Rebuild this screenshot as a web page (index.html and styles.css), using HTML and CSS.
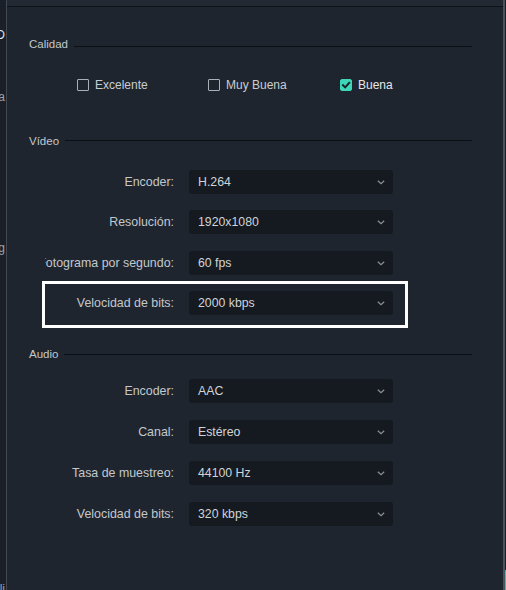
FILE: index.html
```html
<!DOCTYPE html>
<html lang="es">
<head>
<meta charset="utf-8">
<title>Ajustes de exportación</title>
<link rel="stylesheet" href="styles.css">
</head>
<body>
<div class="window">
  <div class="side">
    <div class="frag frag-1"><span>HD</span></div>
    <div class="frag frag-2"><span>Formata</span></div>
    <div class="frag frag-3"><span>Config</span></div>
    <div class="frag frag-4"><span>Compatibili</span></div>
  </div>
  <div class="main">
    <div class="topband"></div>
    <div class="content">
      <section class="sec sec-quality">
        <div class="sec-head"><span>Calidad</span><i class="rule"></i></div>
        <div class="checks">
          <label class="check"><span class="box"></span>Excelente</label>
          <label class="check"><span class="box"></span>Muy Buena</label>
          <label class="check checked"><span class="box"><svg viewBox="0 0 12 12" width="12" height="12"><path d="M3 6.2 L5.2 8.4 L9.2 3.8" fill="none" stroke="#1b2129" stroke-width="2" stroke-linecap="square"/></svg></span>Buena</label>
        </div>
      </section>

      <section class="sec sec-video">
        <div class="sec-head"><span>Vídeo</span><i class="rule"></i></div>
        <div class="rows rows-video">
          <div class="row"><span class="lbl"><span>Encoder:</span></span><div class="select"><span>H.264</span><svg class="chev" viewBox="0 0 8 5" width="8" height="5"><path d="M0.8 0.8 L4 3.8 L7.2 0.8" fill="none" stroke="#8a9098" stroke-width="1.2"/></svg></div></div>
          <div class="row"><span class="lbl"><span>Resolución:</span></span><div class="select"><span>1920x1080</span><svg class="chev" viewBox="0 0 8 5" width="8" height="5"><path d="M0.8 0.8 L4 3.8 L7.2 0.8" fill="none" stroke="#8a9098" stroke-width="1.2"/></svg></div></div>
          <div class="row"><span class="lbl"><span>Fotograma por segundo:</span></span><div class="select"><span>60 fps</span><svg class="chev" viewBox="0 0 8 5" width="8" height="5"><path d="M0.8 0.8 L4 3.8 L7.2 0.8" fill="none" stroke="#8a9098" stroke-width="1.2"/></svg></div></div>
          <div class="row highlighted"><span class="lbl"><span>Velocidad de bits:</span></span><div class="select"><span>2000 kbps</span><svg class="chev" viewBox="0 0 8 5" width="8" height="5"><path d="M0.8 0.8 L4 3.8 L7.2 0.8" fill="none" stroke="#8a9098" stroke-width="1.2"/></svg></div></div>
        </div>
      </section>

      <section class="sec sec-audio">
        <div class="sec-head"><span>Audio</span><i class="rule"></i></div>
        <div class="rows rows-audio">
          <div class="row"><span class="lbl"><span>Encoder:</span></span><div class="select"><span>AAC</span><svg class="chev" viewBox="0 0 8 5" width="8" height="5"><path d="M0.8 0.8 L4 3.8 L7.2 0.8" fill="none" stroke="#8a9098" stroke-width="1.2"/></svg></div></div>
          <div class="row"><span class="lbl"><span>Canal:</span></span><div class="select"><span>Estéreo</span><svg class="chev" viewBox="0 0 8 5" width="8" height="5"><path d="M0.8 0.8 L4 3.8 L7.2 0.8" fill="none" stroke="#8a9098" stroke-width="1.2"/></svg></div></div>
          <div class="row"><span class="lbl"><span>Tasa de muestreo:</span></span><div class="select"><span>44100 Hz</span><svg class="chev" viewBox="0 0 8 5" width="8" height="5"><path d="M0.8 0.8 L4 3.8 L7.2 0.8" fill="none" stroke="#8a9098" stroke-width="1.2"/></svg></div></div>
          <div class="row"><span class="lbl"><span>Velocidad de bits:</span></span><div class="select"><span>320 kbps</span><svg class="chev" viewBox="0 0 8 5" width="8" height="5"><path d="M0.8 0.8 L4 3.8 L7.2 0.8" fill="none" stroke="#8a9098" stroke-width="1.2"/></svg></div></div>
        </div>
      </section>
    </div>
  </div>
  <div class="rside"><div class="rside-line"></div><div class="rside-edge"><div class="teal"></div></div></div>
</div>
</body>
</html>
```

FILE: styles.css
```css
*, *::before, *::after { box-sizing: border-box; }
html, body { margin: 0; padding: 0; }
body {
  background: #1b2028;
  font-family: "Liberation Sans", Arial, sans-serif;
  font-size: 12px;
  color: #c8cdd2;
}
.window {
  display: flex;
  width: 506px;
  height: 590px;
  overflow: hidden;
}

/* left partial panel */
.side {
  width: 7px;
  flex: none;
  background: #1b2028;
  border-right: 1px solid #434a53;
  overflow: hidden;
  display: flex;
  flex-direction: column;
}
.frag {
  display: flex;
  justify-content: flex-end;
  white-space: nowrap;
  line-height: 14px;
  height: 14px;
  color: #9aa1a8;
  font-size: 12px;
  margin-right: 1px;
}
.frag-1 { margin-top: 28px; color: #dfe8f0; }
.frag-2 { margin-top: 48px; }
.frag-3 { margin-top: 137px; }
.frag-4 { margin-top: 327px; }

/* main panel */
.main {
  flex: 1;
  background: #1f252e;
  display: flex;
  flex-direction: column;
}
.topband {
  height: 7px;
  background: #222932;
  border-bottom: 1px solid #0e1216;
}
.content {
  padding: 29px 31px 0 22px;
}
.sec-head {
  display: flex;
  align-items: center;
  gap: 6px;
  height: 16px;
  line-height: 16px;
  font-size: 11.5px;
  color: #c3c8cd;
}
.rule {
  flex: 1;
  height: 1px;
  background: #0b0e12;
}
.sec-quality .rule { margin-top: 4px; }
.sec-video .rule { margin-top: -1px; }

.checks {
  display: grid;
  grid-template-columns: 131px 132px auto;
  margin: 25px 0 0 48px;
  height: 16px;
  line-height: 16px;
}
.check {
  display: flex;
  align-items: center;
  gap: 6px;
  color: #c8cdd2;
}
.box {
  width: 12px;
  height: 12px;
  border: 1px solid #a9afb5;
  border-radius: 1px;
  display: block;
}
.checked .box {
  background: #3dd6b9;
  border-color: #3dd6b9;
  border-radius: 2px;
}
.checked .box svg { display: block; margin: -1px; }
.checked { color: #e4e7ea; }

.sec-video { margin-top: 40px; }
.sec-audio { margin-top: 31px; }
.rows {
  display: flex;
  flex-direction: column;
  margin-left: 16px;
}
.rows-video { margin-top: 21px; gap: 16.4px; }
.rows-audio { margin-top: 17px; gap: 17px; }
.row {
  display: flex;
  align-items: center;
  gap: 15px;
  height: 24px;
  position: relative;
}
.lbl {
  width: 129px;
  flex: none;
  display: flex;
  justify-content: flex-end;
  overflow: hidden;
  white-space: nowrap;
  color: #c3c8cd;
  font-size: 12.4px;
}
.select {
  width: 204px;
  height: 24px;
  background: #151a21;
  border-radius: 3px;
  display: flex;
  align-items: center;
  justify-content: space-between;
  padding: 0 8px 0 9px;
  color: #d0d4d8;
  font-size: 12.3px;
}
.chev { display: block; margin-top: 1px; }

.highlighted::after {
  content: "";
  position: absolute;
  left: -3px;
  top: -10px;
  width: 366px;
  height: 47px;
  border: 3px solid #ffffff;
  pointer-events: none;
}

/* right edge */
.rside {
  width: 3px;
  flex: none;
  display: flex;
}
.rside-line {
  width: 2px;
  background: #4a525c;
}
.rside-edge {
  width: 1px;
  background: #1a1f26;
  display: flex;
  flex-direction: column;
  justify-content: flex-end;
}
.teal {
  height: 20px;
  background: #3dbfa6;
}
```
